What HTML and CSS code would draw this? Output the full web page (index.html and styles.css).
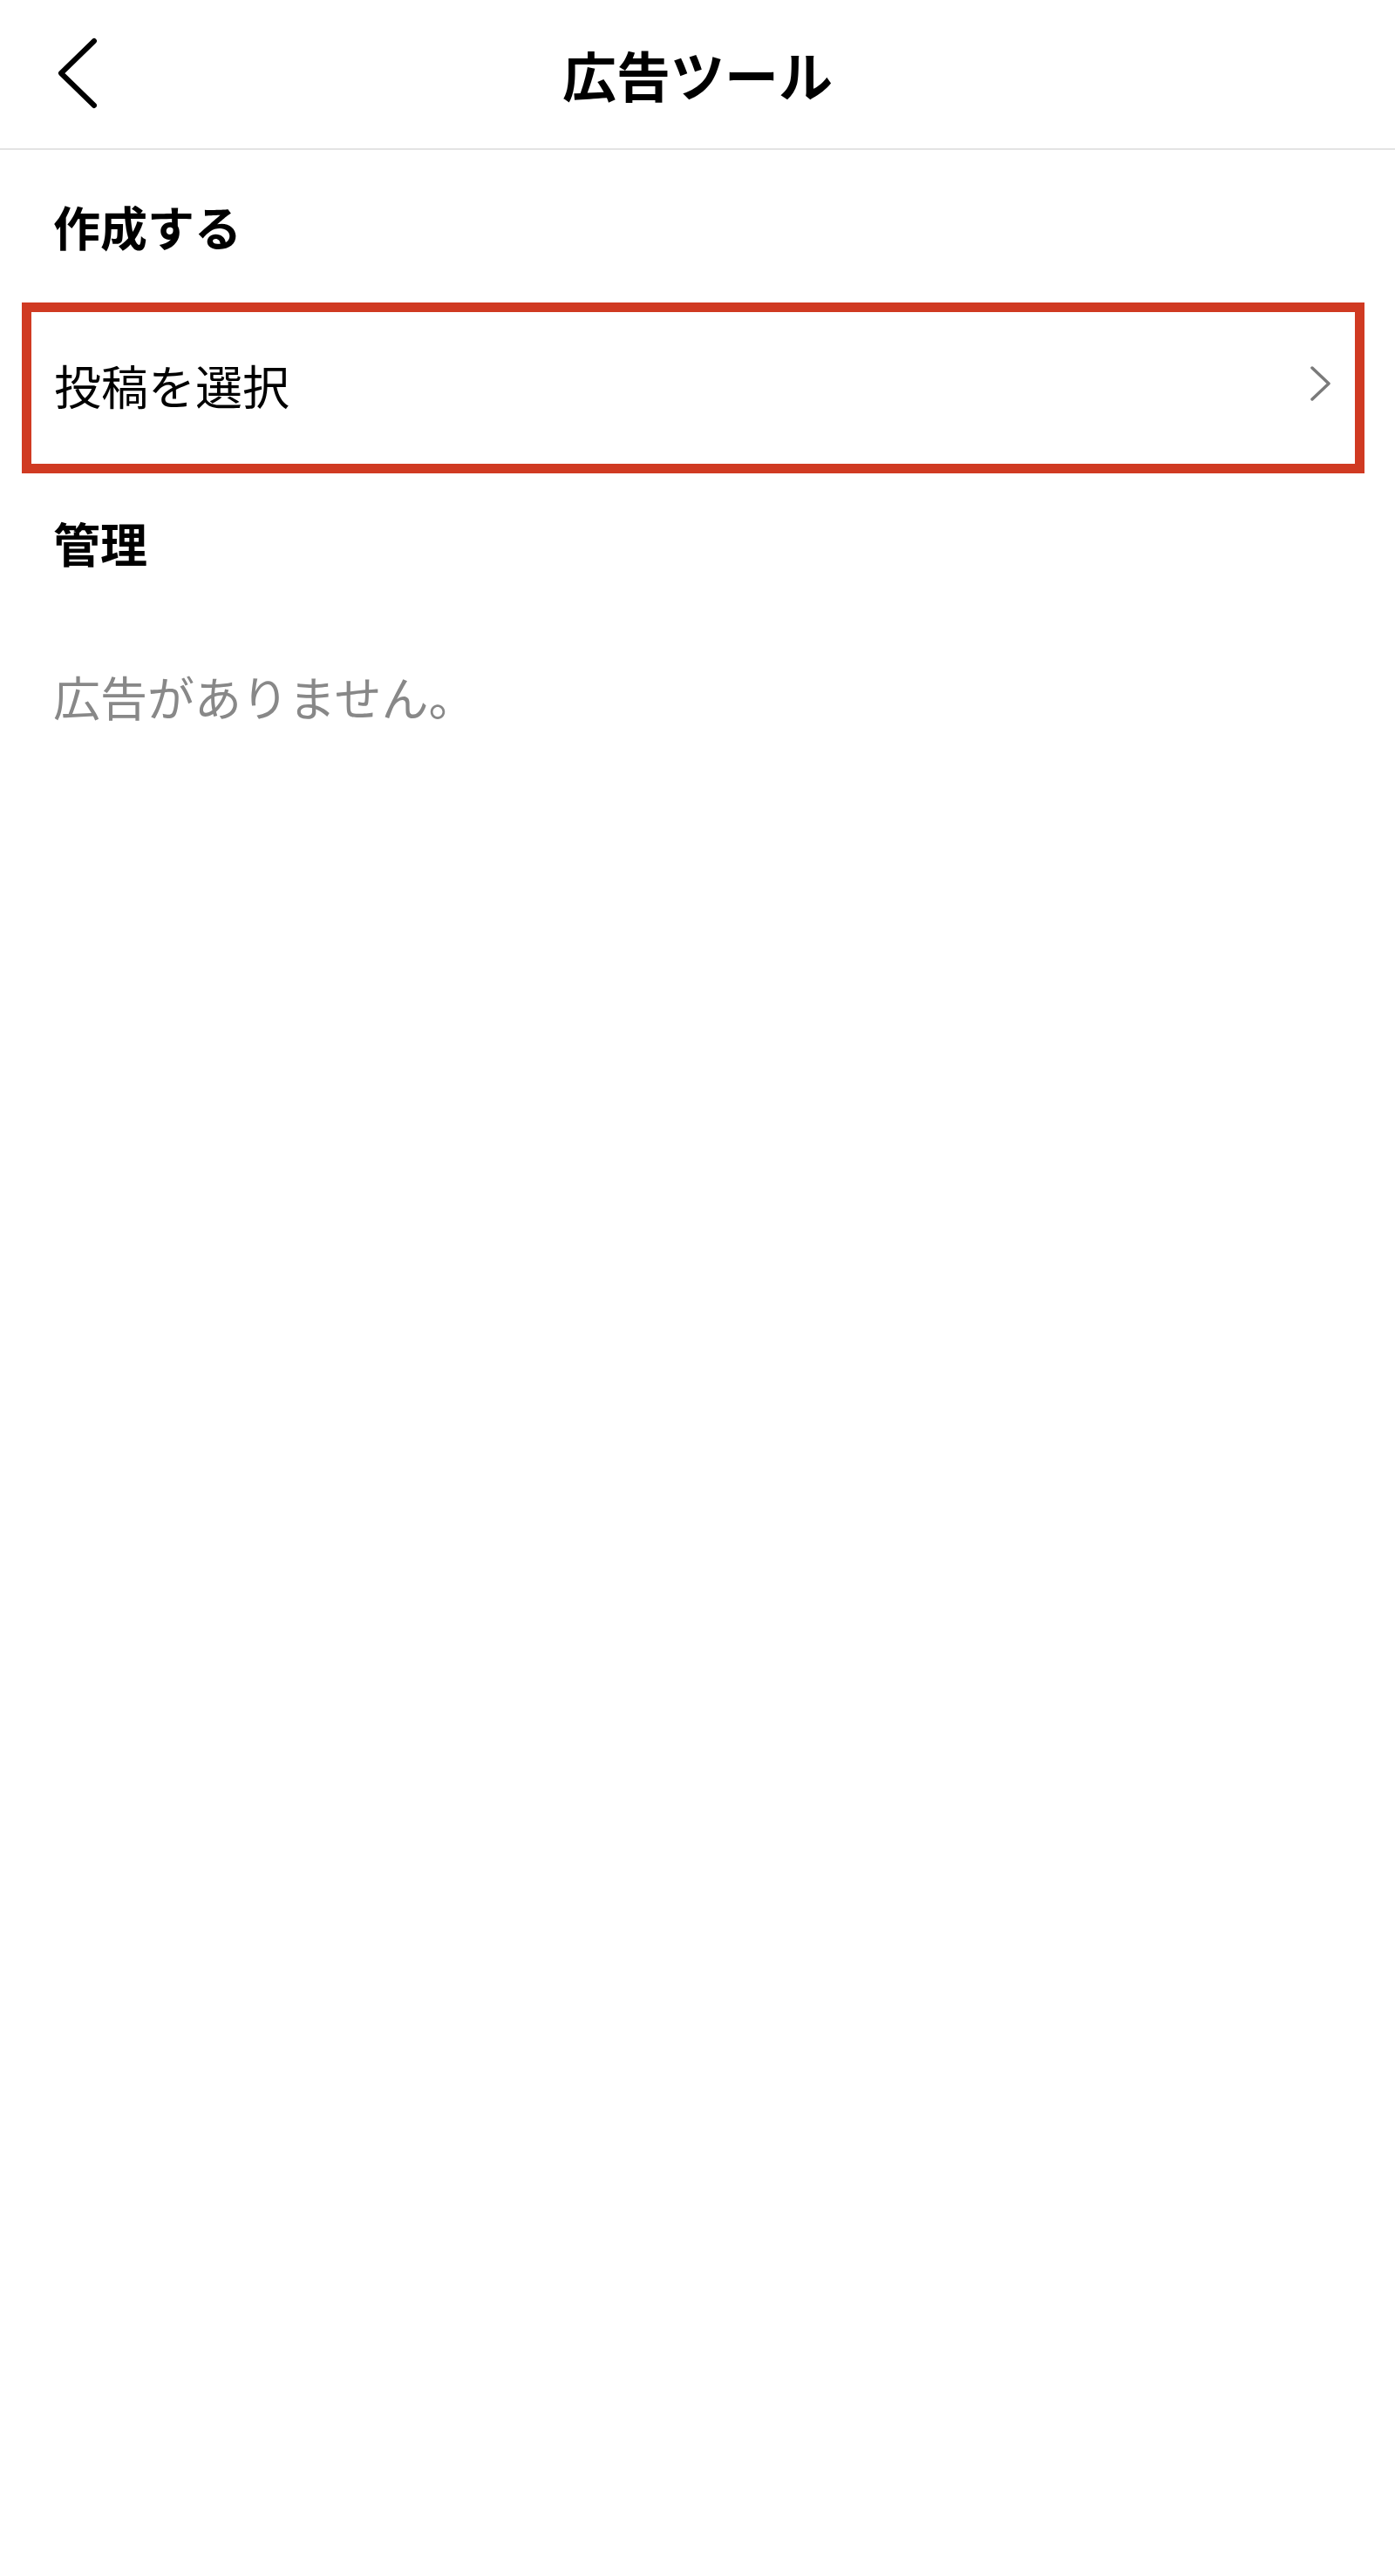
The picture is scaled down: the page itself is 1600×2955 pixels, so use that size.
FILE: index.html
```html
<!DOCTYPE html>
<html lang="ja">
<head>
<meta charset="utf-8">
<title>広告ツール</title>
<link rel="stylesheet" href="styles.css">
</head>
<body>
<div class="screen">
  <header class="topbar">
    <div class="topbar-left">
      <svg class="back-icon" width="50" height="84" viewBox="0 0 50 84">
        <polyline points="42,4 4,41 42,78" fill="none" stroke="#000" stroke-width="6" stroke-linecap="round" stroke-linejoin="round"/>
      </svg>
    </div>
    <h1 class="title">広告ツール</h1>
    <div class="topbar-right"></div>
  </header>

  <section class="section">
    <h2 class="section-title">作成する</h2>
  </section>

  <div class="row row-highlight">
    <span class="row-label">投稿を選択</span>
    <svg class="chevron" width="30" height="44" viewBox="0 0 30 44">
      <polyline points="5,3 24,21 5,39" fill="none" stroke="#7a7a7a" stroke-width="3.5" stroke-linecap="round" stroke-linejoin="round"/>
    </svg>
  </div>

  <section class="section section-manage">
    <h2 class="section-title">管理</h2>
  </section>

  <p class="empty">広告がありません。</p>
</div>
</body>
</html>
```

FILE: styles.css
```css
html, body {
  margin: 0;
  padding: 0;
  background: #ffffff;
}

body {
  font-family: "Noto Sans CJK JP", "Noto Sans", sans-serif;
  color: #000000;
}

.screen {
  width: 1600px;
  min-height: 2955px;
  display: flex;
  flex-direction: column;
  background: #ffffff;
}

.topbar {
  height: 170px;
  border-bottom: 2px solid #e3e3e3;
  display: grid;
  grid-template-columns: 1fr auto 1fr;
  align-items: center;
}

.topbar-left {
  display: flex;
  align-items: center;
  padding-left: 66px;
}

.back-icon {
  display: block;
}

.title {
  margin: 0;
  font-size: 62px;
  font-weight: 700;
  line-height: 1;
}

.section {
  height: 175px;
  display: flex;
  align-items: center;
  padding-left: 61px;
}

.section-manage {
  height: 160px;
}

.section-title {
  margin: 0;
  font-size: 54px;
  font-weight: 700;
  line-height: 1;
}

.row {
  height: 174px;
  margin: 0 35px 0 25px;
  display: flex;
  align-items: center;
  justify-content: space-between;
  padding: 0 24px 0 26px;
}

.row-highlight {
  border: 11px solid #d03a22;
}

.row-label {
  font-size: 54px;
  font-weight: 400;
  line-height: 1;
  margin-top: -6px;
}

.chevron {
  display: block;
  margin-top: -8px;
}

.empty {
  margin: 0;
  height: 192px;
  display: flex;
  align-items: center;
  padding-left: 61px;
  font-size: 54px;
  line-height: 1;
  color: #888888;
}
```
